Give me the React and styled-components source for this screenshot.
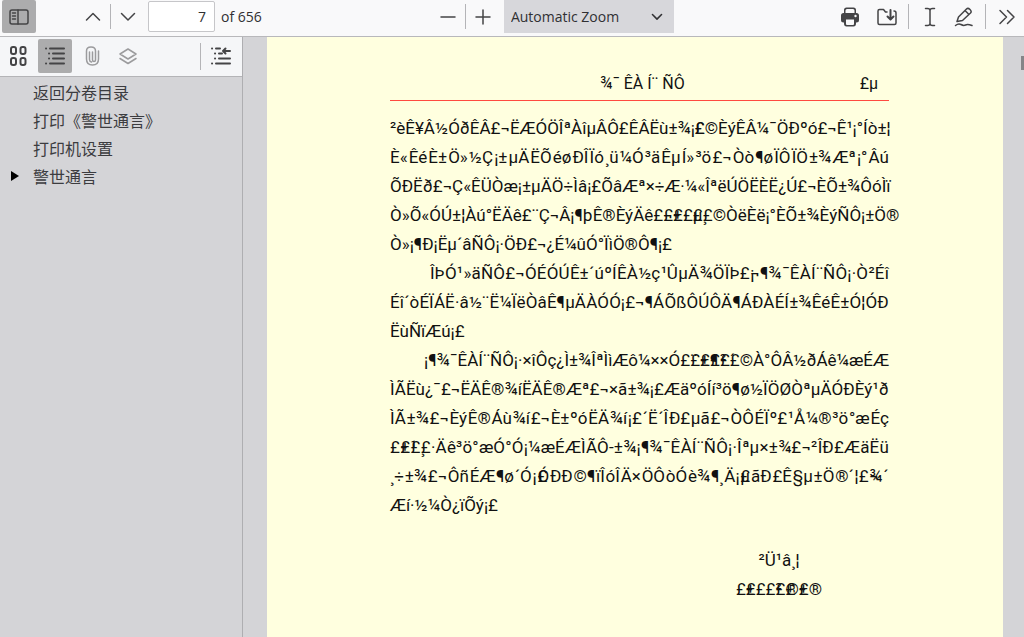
import { useState } from 'react'
import styled, { createGlobalStyle } from 'styled-components'

const GlobalStyle = createGlobalStyle`
  * {
    box-sizing: border-box;
  }
  body {
    margin: 0;
    overflow: hidden;
    background: #d4d4d7;
    color: #303033;
    font-family: 'Open Sans', 'Noto Sans CJK SC', sans-serif;
  }
  button, input, select {
    font: inherit;
    color: inherit;
  }
`

const Viewer = styled.div`
  display: flex;
  flex-direction: column;
  height: 100vh;
`
const Toolbar = styled.header`
  display: flex;
  justify-content: space-between;
  flex: none;
  padding-bottom: 3px;
  border-bottom: 1px solid #b8b8bb;
  background: #f9f9fa;
  font-size: 14px;
`
const Group = styled.div`
  display: flex;
  align-items: center;
  padding: ${(props) => props.$pad || '0'};
`
const IconButton = styled.button`
  display: flex;
  align-items: center;
  justify-content: center;
  width: 34px;
  height: ${(props) => props.$height || 33}px;
  margin-left: ${(props) => props.$gap || 0}px;
  padding: 0;
  border: 0;
  border-radius: 2px;
  background: ${(props) => (props.$active ? '#acacad' : 'transparent')};
  color: ${(props) => (props.disabled ? '#9b9b9d' : '#444446')};
`
const Separator = styled.span`
  width: 1px;
  height: ${(props) => props.$height || 25}px;
  margin: 0 ${(props) => props.$gap || 0}px;
  background: #b4b4b7;
`
const PageInput = styled.input`
  width: 67px;
  height: 31px;
  margin: 0 6px 0 3px;
  padding: 0 8px;
  border: 1px solid #c6c6c9;
  border-radius: 2px;
  background: #fff;
  text-align: right;
`
const ZoomBox = styled.div`
  display: flex;
  align-items: center;
  margin-left: 4px;
  background: #d7d7db;
`
const ZoomSelect = styled.select`
  width: 170px;
  height: 33px;
  margin-right: -24px;
  padding: 0 28px 0 7px;
  border: 0;
  appearance: none;
  background: transparent;
`
const ChevronBox = styled.span`
  display: flex;
  width: 24px;
  pointer-events: none;
`
const Body = styled.div`
  display: flex;
  flex: 1;
  min-height: 0;
`
const Sidebar = styled.aside`
  flex: none;
  width: 243px;
  border-right: 1px solid #aeaeb1;
`
const SidebarBar = styled.div`
  display: flex;
  align-items: center;
  justify-content: space-between;
  height: 40px;
  padding: 0 4px 1px 1px;
  border-bottom: 1px solid #b4b4b7;
  background: #f5f6f8;
`
const Outline = styled.ul`
  margin: 0;
  padding: 1px 0 0 10px;
  list-style: none;
  font-family: 'Noto Sans CJK SC', sans-serif;
  font-size: 16px;
  line-height: 28px;
`
const OutlineItem = styled.li`
  display: flex;
  align-items: center;
`
const Marker = styled.span`
  display: flex;
  width: 23px;
`
const OutlineLink = styled.a`
  color: #3c3c3f;
  text-decoration: none;
`
const PageArea = styled.main`
  display: flex;
  flex: 1;
  min-width: 0;
  padding-left: 24px;
`
const Page = styled.article`
  flex: 1;
  min-width: 0;
  padding: 34px 114px 0 123px;
  background: #ffffdf;
  color: #111;
  font-family: Roboto, 'Liberation Sans', sans-serif;
  font-size: 17px;
  white-space: nowrap;
`
const PageHead = styled.div`
  display: grid;
  grid-template-columns: 210px 1fr auto;
  padding: 0 11px 3px 0;
  border-bottom: 1px solid #ff4a40;
  font-size: 16px;
  line-height: 26px;
`
const Text = styled.div`
  padding-top: 13px;
`
const Line = styled.p`
  display: flex;
  justify-content: ${(props) => (props.$last ? 'flex-start' : 'space-between')};
  margin: 0;
  padding-left: ${(props) => props.$indent || 0}px;
  line-height: 29px;
`
const Signature = styled.div`
  display: grid;
  justify-items: center;
  width: 94px;
  margin: 26px 63px 0 auto;
  line-height: 29px;
`
const Overlap = styled.span`
  display: inline-grid;

  span {
    grid-area: 1 / 1;
  }
`
const ScrollTrack = styled.div`
  display: flex;
  justify-content: flex-end;
  flex: none;
  width: 21px;
  padding-top: 19px;
`
const ScrollThumb = styled.span`
  width: 3px;
  height: 14px;
  background: #858588;
`

function Icon({ size = 20, children, width = 1.5 }) {
  return (
    <svg
      width={size}
      height={size}
      viewBox="0 0 20 20"
      fill="none"
      stroke="currentColor"
      strokeWidth={width}
      strokeLinecap="round"
      strokeLinejoin="round"
      aria-hidden="true"
    >
      {children}
    </svg>
  )
}

const icons = {
  sidebar: (
    <>
      <rect x="1" y="3" width="18" height="14" rx="2" />
      <path d="M9 3v14M3.5 6h3M3.5 9h3M3.5 12h3" />
    </>
  ),
  up: <path d="M3.5 13 10 6.5l6.5 6.5" />,
  down: <path d="M3.5 6.5 10 13l6.5-6.5" />,
  minus: <path d="M3 10h14" />,
  plus: <path d="M3 10h14M10 3v14" />,
  print: (
    <>
      <path
        d="M4 6V3q0-2.500 2.500-2.500h7Q16 .5 16 3v3h.5q2.500 0 2.500 2.500V13q0 2.500-2.500 2.500H16v1q0 3-2.500 3h-7q-2.500 0-2.500-3v-1h-.5Q1 15.500 1 13V8.500Q1 6 3.500 6z"
        fill="currentColor"
        stroke="none"
      />
      <path d="M5.500 6V3.500Q5.500 2 7 2h6q1.500 0 1.500 1.500V6zM6 12.500h8V17q0 1-1 1H7q-1 0-1-1z" fill="#f9f9fa" stroke="none" />
      <circle cx="15.500" cy="9" r="1.200" fill="#f9f9fa" stroke="none" />
    </>
  ),
  save: (
    <>
      <path d="M10 5H8.500L6.500 2.500h-4Q1 2.500 1 4v12q0 1.500 1.500 1.500h15q1.500 0 1.500-1.500V6q0-2-2-2" />
      <path d="M13.500 3v9M10.500 9.500l3 3 3-3" strokeWidth="2" />
    </>
  ),
  text: <path d="M5.500 1.500h2q2.500 0 2.500 2 0-2 2.500-2h2M5.500 18.500h2q2.500 0 2.500-2 0 2 2.500 2h2M10 3.500v13" />,
  draw: (
    <>
      <path d="m3 14.500 1.500-4.500 8-8q1.500-1.500 3.500.5t.5 3.500l-8 7.500zM11 3.500l3.500 3.500" />
      <path d="M1.500 18.500q3-2.500 5.500-1t4.500.5 6.500.5" />
    </>
  ),
  more: <path d="m3 3.500 6.500 6.500L3 16.500M10.500 3.500 17 10l-6.500 6.500" />,
  grid: (
    <>
      <rect x="3" y="1" width="5" height="7" rx="2" />
      <rect x="12.500" y="1" width="5" height="7" rx="2" />
      <rect x="3" y="12" width="5" height="7" rx="2" />
      <rect x="12.500" y="12" width="5" height="7" rx="2" />
    </>
  ),
  outline: <path d="M1 2.500h.1M5 2.500h14M4 7.500h.1M8 7.500h11M4 12.500h.1M8 12.500h11M1 17.500h.1M5 17.500h14" />,
  clip: <path d="M13.500 14V5q0-4-4.500-4T4.500 5v8q0 6 6 6t6-6V5M10.500 6v8q0 1.500 1.500 1.500t1.500-1.500M7.500 6v7.500q0 2 2 2.500" />,
  layers: (
    <>
      <path d="m10 3 8 5-8 5-8-5z" />
      <path d="m2 12.500 8 5 8-5" />
    </>
  ),
  current: (
    <>
      <path d="M1 2.500h.1M5 2.500h4M4 7.500h.1M8 7.500h3M4 12.500h.1M8 12.500h11M1 17.500h.1M5 17.500h14" />
      <path d="M19 5h-7M14.500 2.500 12 5l2.500 2.500" />
    </>
  ),
}

const outline = [
  { title: '返回分卷目录' },
  { title: '打印《警世通言》' },
  { title: '打印机设置' },
  { title: '警世通言', nested: true },
]

// square brackets hold glyphs that are printed over each other
const lines = [
  { text: '²èÊ¥Â½ÓðÊÂ£¬ËÆÓÖÎªÀîµÂÔ£ÊÂËù±¾¡[££]©ÈýÊÂ¼¯ÖÐºó£¬Ê¹¡°Íò±¦' },
  { text: 'È«ÊéÈ±Ö»½Ç¡±µÄËÕéøÐÎÏó¸ü¼Ó³äÊµÍ»³ö£¬Òò¶øÏÔÏÖ±¾Æª¡°Âú' },
  { text: 'ÕÐËð£¬Ç«ÊÜÒæ¡±µÄÖ÷Ìâ¡£ÕâÆª×÷Æ·¼«ÎªëÚÖËÈË¿Ú£¬ÈÕ±¾ÔóÌï' },
  { text: 'Ò»Õ«ÓÚ±¦Àú°ËÄê£¨Ç¬Â¡¶þÊ®ÈýÄê£[¬£][±£][·£][µ£][¸£]©ÒëÈë¡°ÈÕ±¾ÈýÑÔ¡±Ö®' },
  { text: 'Ò»¡¶Ð¡Ëµ´âÑÔ¡·ÖÐ£¬¿É¼ûÓ°ÏìÖ®Ô¶¡£', last: true },
  { text: 'ÎÞÓ¹»äÑÔ£¬ÓÉÓÚÊ±´úºÍÊÀ½ç¹ÛµÄ¾ÖÏÞ£[¬¡]¶¾¯ÊÀÍ¨ÑÔ¡·Ò²Éî', indent: 40 },
  { text: 'Éî´òÉÏÁË·â½¨Ë¼ÏëÒâÊ¶µÄÀÓÓ¡£¬¶ÁÕßÔÚÔÄ¶ÁÐÀÉÍ±¾ÊéÊ±Ó¦ÓÐ' },
  { text: 'ËùÑïÆú¡£', last: true },
  { text: '¡¶¾¯ÊÀÍ¨ÑÔ¡·×îÔç¿Ì±¾ÎªÌìÆô¼××Ó£[¨£][±£][¶£][²£][´£]©À°ÔÂ½ðÁê¼æÉÆ', indent: 34 },
  { text: 'ÌÃËù¿¯£¬ËÄÊ®¾íËÄÊ®Æª£¬×ã±¾¡£ÆäºóÍí³ö¶ø½ÏÖØÒªµÄÓÐÈý¹ð' },
  { text: 'ÌÃ±¾£¬ÈýÊ®Áù¾í£¬È±ºóËÄ¾í¡£´Ë´ÎÐ£µã£¬ÒÔÉÏº£¹Å¼®³ö°æÉç' },
  { text: '£[±£][¹£][¸£]·Äê³ö°æÓ°Ó¡¼æÉÆÌÃÔ-±¾¡¶¾¯ÊÀÍ¨ÑÔ¡·Îªµ×±¾£¬²ÎÐ£ÆäËü' },
  { text: '¸÷±¾£¬ÔñÉÆ¶ø´Ó¡[£Ó]ÐÐ©¶ïÎóÎÄ×ÖÔòÓè¾¶¸Ä¡[£µ]ãÐ£Ê§µ±Ö®´¦£[¬¾]´' },
  { text: 'Æí·½¼Ò¿ïÕý¡£', last: true },
]

function Glyphs({ text }) {
  const parts = text.match(/\[..\]|[^[\]]{1,2}/g)

  return parts.map((part, i) =>
    part.startsWith('[') ? (
      <Overlap key={i}>
        <span>{part[1]}</span>
        <span>{part[2]}</span>
      </Overlap>
    ) : (
      <span key={i}>{part}</span>
    )
  )
}

function App() {
  const [page, setPage] = useState('7')

  return (
    <Viewer>
      <GlobalStyle />
      <Toolbar>
        <Group $pad="0 10px 0 2px">
          <IconButton $active aria-label="Toggle sidebar">
            <Icon>{icons.sidebar}</Icon>
          </IconButton>
          <IconButton $gap={40} aria-label="Previous page">
            <Icon>{icons.up}</Icon>
          </IconButton>
          <Separator />
          <IconButton aria-label="Next page">
            <Icon>{icons.down}</Icon>
          </IconButton>
          <PageInput aria-label="Page" value={page} onChange={(e) => setPage(e.target.value)} />
          <span>of 656</span>
        </Group>
        <Group>
          <IconButton aria-label="Zoom out">
            <Icon>{icons.minus}</Icon>
          </IconButton>
          <Separator />
          <IconButton aria-label="Zoom in">
            <Icon>{icons.plus}</Icon>
          </IconButton>
          <ZoomBox>
            <ZoomSelect aria-label="Zoom">
              <option>Automatic Zoom</option>
            </ZoomSelect>
            <ChevronBox>
              <Icon size={14} width={2.2}>
                {icons.down}
              </Icon>
            </ChevronBox>
          </ZoomBox>
        </Group>
        <Group>
          <IconButton aria-label="Print">
            <Icon>{icons.print}</Icon>
          </IconButton>
          <IconButton $gap={3} aria-label="Save">
            <Icon>{icons.save}</Icon>
          </IconButton>
          <Separator $gap={4} />
          <IconButton aria-label="Text">
            <Icon>{icons.text}</Icon>
          </IconButton>
          <IconButton aria-label="Draw">
            <Icon>{icons.draw}</Icon>
          </IconButton>
          <Separator $gap={4} />
          <IconButton aria-label="Tools">
            <Icon>{icons.more}</Icon>
          </IconButton>
        </Group>
      </Toolbar>
      <Body>
        <Sidebar>
          <SidebarBar>
            <Group>
              <IconButton $height={34} aria-label="Thumbnails">
                <Icon width={2}>{icons.grid}</Icon>
              </IconButton>
              <IconButton $height={34} $gap={3} $active aria-label="Document outline">
                <Icon width={2}>{icons.outline}</Icon>
              </IconButton>
              <IconButton $height={34} $gap={3} disabled aria-label="Attachments">
                <Icon>{icons.clip}</Icon>
              </IconButton>
              <IconButton $height={34} $gap={2} disabled aria-label="Layers">
                <Icon>{icons.layers}</Icon>
              </IconButton>
            </Group>
            <Group>
              <Separator $height={27} $gap={3} />
              <IconButton $height={34} aria-label="Current outline item">
                <Icon width={2}>{icons.current}</Icon>
              </IconButton>
            </Group>
          </SidebarBar>
          <Outline>
            {outline.map((item) => (
              <OutlineItem key={item.title}>
                <Marker>
                  {item.nested && (
                    <svg width="10" height="10" aria-hidden="true">
                      <path d="M1 0 9 5 1 10z" fill="#000" />
                    </svg>
                  )}
                </Marker>
                <OutlineLink href="#">{item.title}</OutlineLink>
              </OutlineItem>
            ))}
          </Outline>
        </Sidebar>
        <PageArea>
          <Page>
            <PageHead>
              <span />
              <span>¾¯ ÊÀ Í¨ ÑÔ</span>
              <span>£µ</span>
            </PageHead>
            <Text>
              {lines.map((line) => (
                <Line key={line.text} $indent={line.indent} $last={line.last}>
                  <Glyphs text={line.text} />
                </Line>
              ))}
            </Text>
            <Signature>
              <span>²Ü¹â¸¦</span>
              <span>
                <Glyphs text="£[±£]££[²£][®£][±£]®" />
              </span>
            </Signature>
          </Page>
          <ScrollTrack>
            <ScrollThumb />
          </ScrollTrack>
        </PageArea>
      </Body>
    </Viewer>
  )
}

export default App
